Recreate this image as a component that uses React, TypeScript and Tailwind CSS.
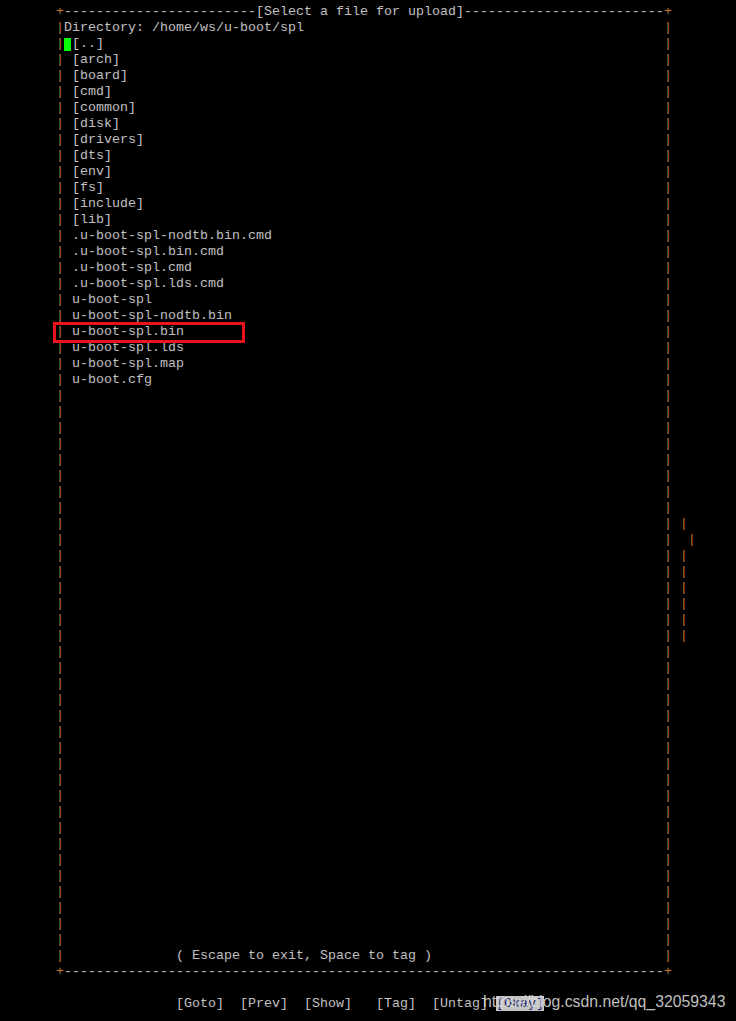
import React from "react";

const BAR = "text-[#c07a3c]";
const TXT = "text-[#c0c0c0]";

const files = [
  "[arch]",
  "[board]",
  "[cmd]",
  "[common]",
  "[disk]",
  "[drivers]",
  "[dts]",
  "[env]",
  "[fs]",
  "[include]",
  "[lib]",
  ".u-boot-spl-nodtb.bin.cmd",
  ".u-boot-spl.bin.cmd",
  ".u-boot-spl.cmd",
  ".u-boot-spl.lds.cmd",
  "u-boot-spl",
  "u-boot-spl-nodtb.bin",
  "u-boot-spl.bin",
  "u-boot-spl.lds",
  "u-boot-spl.map",
  "u-boot.cfg",
];

function Row({ children }: { children?: React.ReactNode }) {
  return <div className="h-[16px] leading-[16px] whitespace-pre">{children}</div>;
}

function Framed({ text, extra }: { text: string; extra?: string }) {
  return (
    <Row>
      <span className={BAR}>|</span>
      <span className={TXT}>{text.padEnd(75)}</span>
      <span className={BAR}>|</span>
      {extra ? <span className={BAR}>{extra}</span> : null}
    </Row>
  );
}

export default function App() {
  const emptyRows: React.ReactNode[] = [];
  for (let r = 24; r <= 58; r++) {
    let extra = "";
    if (r === 32 || (r >= 34 && r <= 39)) extra = " |";
    if (r === 33) extra = "  |";
    emptyRows.push(<Framed key={r} text="" extra={extra} />);
  }

  return (
    <div className="relative w-[736px] h-[1021px] bg-black overflow-hidden font-['Liberation_Mono',monospace] text-[13.333px]">
      <div className="pt-[4px] pl-[56px]">
        <Row>
          <span className={BAR}>+</span>
          <span className={TXT}>{"-".repeat(24) + "[Select a file for upload]" + "-".repeat(25)}</span>
          <span className={BAR}>+</span>
        </Row>
        <Framed text="Directory: /home/ws/u-boot/spl" />
        <Row>
          <span className={BAR}>|</span>
          <span className="inline-flex w-[8px] h-[16px] align-top items-center">
            <span className="block w-[7px] h-[13px] mt-[1px] bg-[#00ff00]" />
          </span>
          <span className={TXT}>{"[..]".padEnd(74)}</span>
          <span className={BAR}>|</span>
        </Row>
        {files.map((f) => (
          <Framed key={f} text={" " + f} />
        ))}
        {emptyRows}
        <Framed text={" ".repeat(14) + "( Escape to exit, Space to tag )"} />
        <Row>
          <span className={BAR}>+</span>
          <span className={TXT}>{"-".repeat(75)}</span>
          <span className={BAR}>+</span>
        </Row>
        <Row />
        <Row>
          <span className={TXT}>{" ".repeat(15) + "[Goto]  [Prev]  [Show]   [Tag]  [Untag] "}</span>
          <span className="bg-[#c4c4c4] text-[#1a2a6a]">[Okay]</span>
        </Row>
      </div>

      {/* red annotation box */}
      <div className="absolute left-[53px] top-[322px] w-[192px] h-[21px] border-[3px] border-[#e8141c]" />

      {/* watermark */}
      <div className="absolute left-[483px] top-[993px] font-['Liberation_Sans',Arial,sans-serif] text-[15.8px] leading-[18px] text-[#d8d8d8]/90 whitespace-nowrap">
        https://blog.csdn.net/qq_32059343
      </div>
    </div>
  );
}
